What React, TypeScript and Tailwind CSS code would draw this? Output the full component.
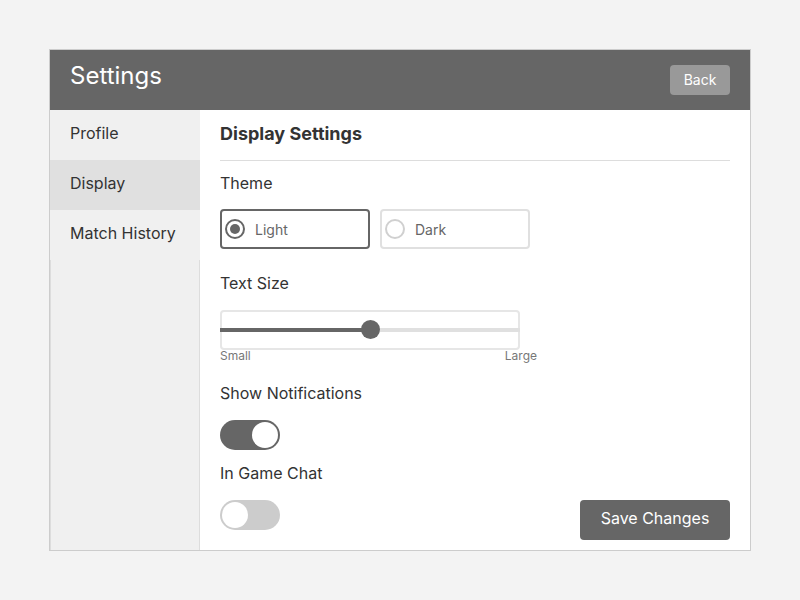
import React from "react";

export default function App() {
  return (
    <div
      className="w-[800px] h-[600px] bg-[#f3f3f3] pt-[49px] pl-[49px]"
      style={{ fontFamily: "Inter, 'Noto Sans', sans-serif" }}
    >
      <div className="w-[702px] h-[502px] border border-[#cccccc] bg-white flex flex-col">
        <div className="h-[60px] bg-[#666666] flex items-center justify-between px-5">
          <div className="text-[24px] text-white leading-8 mt-[-9px]">Settings</div>
          <button className="w-[60px] h-[30px] bg-[#999999] rounded-[4px] text-white text-[14px] leading-5">
            Back
          </button>
        </div>
        <div className="flex flex-1">
          <div className="w-[150px] bg-[#f0f0f0] flex flex-col text-[16px] text-[#333333]">
            <div className="h-[50px] flex items-center px-5 pb-1">Profile</div>
            <div className="h-[50px] flex items-center px-5 pb-1 bg-[#e0e0e0]">Display</div>
            <div className="h-[50px] flex items-center px-5 pb-1">Match History</div>
            <div className="flex-1 border-l border-r border-[#dddddd]" />
          </div>
          <div className="flex-1 px-5 pt-[10px] text-[#333333]">
            <div className="border-b border-[#dddddd] pb-[12px]">
              <div className="text-[18px] leading-7 font-bold">Display Settings</div>
            </div>
            <div className="mt-[10px] text-[16px] leading-6">Theme</div>
            <div className="mt-[14px] flex gap-[10px]">
              <div className="w-[150px] h-[40px] border-2 border-[#666666] rounded-[4px] flex items-center px-[3px] gap-[10px]">
                <div className="w-[20px] h-[20px] rounded-full border-2 border-[#666666] flex items-center justify-center">
                  <div className="w-[10px] h-[10px] rounded-full bg-[#666666]" />
                </div>
                <span className="text-[14px] text-[#666666]">Light</span>
              </div>
              <div className="w-[150px] h-[40px] border-2 border-[#e0e0e0] rounded-[4px] flex items-center px-[3px] gap-[10px]">
                <div className="w-[20px] h-[20px] rounded-full border-2 border-[#d0d0d0]" />
                <span className="text-[14px] text-[#666666]">Dark</span>
              </div>
            </div>
            <div className="mt-[22px] text-[16px] leading-6">Text Size</div>
            <div className="mt-[15px] w-[300px] h-[40px] border-2 border-[#e6e6e6] rounded-[4px] relative">
              <div className="absolute left-[-2px] right-[-2px] top-[16px] h-[4px] bg-[#e0e0e0]" />
              <div className="absolute left-[-2px] w-[150px] top-[16px] h-[4px] bg-[#666666]" />
              <div className="absolute left-[139px] top-[8px] w-[19px] h-[19px] rounded-full bg-[#666666]" />
            </div>
            <div className="w-[317px] flex justify-between text-[12px] leading-4 text-[#777777] mt-[-2px]">
              <span>Small</span>
              <span>Large</span>
            </div>
            <div className="mt-[17px] text-[16px] leading-6">Show Notifications</div>
            <div className="mt-[15px] w-[60px] h-[30px] rounded-full bg-[#666666] relative">
              <div className="absolute right-[2px] top-[2px] w-[26px] h-[26px] rounded-full bg-white" />
            </div>
            <div className="mt-[11px] text-[16px] leading-6">In Game Chat</div>
            <div className="mt-[15px] flex justify-between items-start">
              <div className="w-[60px] h-[30px] rounded-full bg-[#cccccc] relative">
                <div className="absolute left-[2px] top-[2px] w-[26px] h-[26px] rounded-full bg-white" />
              </div>
              <button className="w-[150px] h-[40px] bg-[#666666] rounded-[4px] text-white text-[16px] pb-[4px]">
                Save Changes
              </button>
            </div>
          </div>
        </div>
      </div>
    </div>
  );
}
